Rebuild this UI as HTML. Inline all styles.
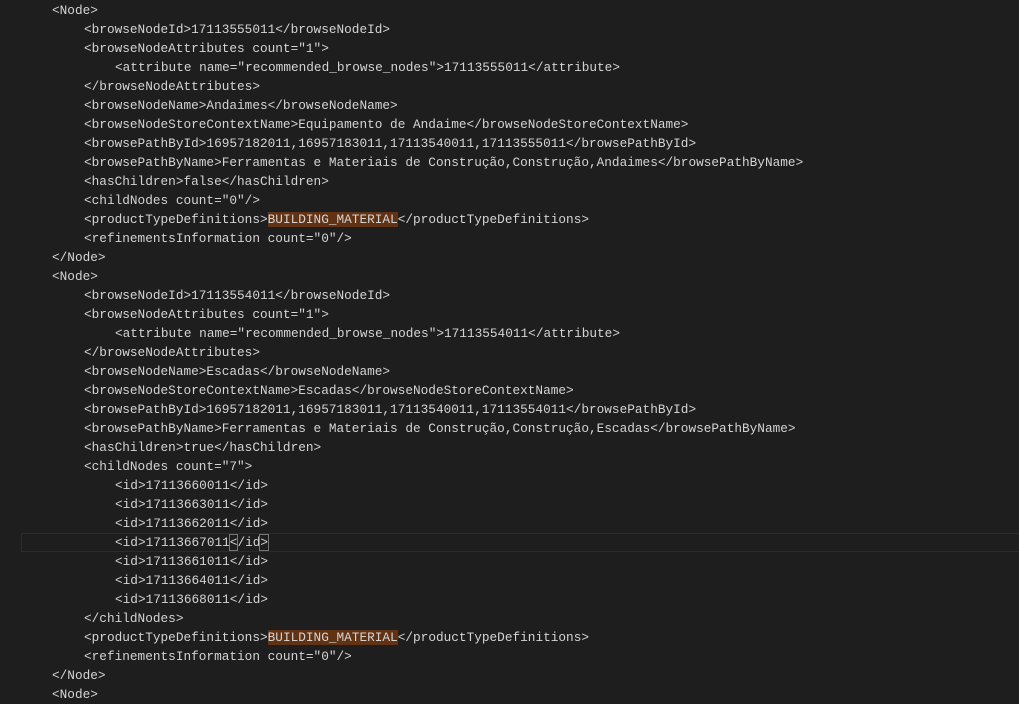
<!DOCTYPE html>
<html><head><meta charset="utf-8"><style>
html,body{margin:0;padding:0;background:#1e1e1e;width:1019px;height:694px;overflow:hidden}
#w{position:absolute;left:0;top:1px;width:1019px;height:694px}
.l{position:absolute;height:19px;line-height:19px;font-family:"Liberation Mono",monospace;font-size:12.75px;color:#d4d4d4;white-space:pre}
.a{left:52px}.b{left:84px}.c{left:115px}
.h{background:#613214}
.cur{position:absolute;left:21px;top:532px;width:1000px;height:17px;border:1px solid #2c2c2c}
.m{outline:1px solid #777;}
</style></head><body><div id="w">
<div class="cur"></div>
<div class="l a" style="top:0px">&lt;Node&gt;</div>
<div class="l b" style="top:19px">&lt;browseNodeId&gt;17113555011&lt;/browseNodeId&gt;</div>
<div class="l b" style="top:38px">&lt;browseNodeAttributes count="1"&gt;</div>
<div class="l c" style="top:57px">&lt;attribute name="recommended_browse_nodes"&gt;17113555011&lt;/attribute&gt;</div>
<div class="l b" style="top:76px">&lt;/browseNodeAttributes&gt;</div>
<div class="l b" style="top:95px">&lt;browseNodeName&gt;Andaimes&lt;/browseNodeName&gt;</div>
<div class="l b" style="top:114px">&lt;browseNodeStoreContextName&gt;Equipamento de Andaime&lt;/browseNodeStoreContextName&gt;</div>
<div class="l b" style="top:133px">&lt;browsePathById&gt;16957182011,16957183011,17113540011,17113555011&lt;/browsePathById&gt;</div>
<div class="l b" style="top:152px">&lt;browsePathByName&gt;Ferramentas e Materiais de Construção,Construção,Andaimes&lt;/browsePathByName&gt;</div>
<div class="l b" style="top:171px">&lt;hasChildren&gt;false&lt;/hasChildren&gt;</div>
<div class="l b" style="top:190px">&lt;childNodes count="0"/&gt;</div>
<div class="l b" style="top:209px">&lt;productTypeDefinitions&gt;<span class="h">BUILDING_MATERIAL</span>&lt;/productTypeDefinitions&gt;</div>
<div class="l b" style="top:228px">&lt;refinementsInformation count="0"/&gt;</div>
<div class="l a" style="top:247px">&lt;/Node&gt;</div>
<div class="l a" style="top:266px">&lt;Node&gt;</div>
<div class="l b" style="top:285px">&lt;browseNodeId&gt;17113554011&lt;/browseNodeId&gt;</div>
<div class="l b" style="top:304px">&lt;browseNodeAttributes count="1"&gt;</div>
<div class="l c" style="top:323px">&lt;attribute name="recommended_browse_nodes"&gt;17113554011&lt;/attribute&gt;</div>
<div class="l b" style="top:342px">&lt;/browseNodeAttributes&gt;</div>
<div class="l b" style="top:361px">&lt;browseNodeName&gt;Escadas&lt;/browseNodeName&gt;</div>
<div class="l b" style="top:380px">&lt;browseNodeStoreContextName&gt;Escadas&lt;/browseNodeStoreContextName&gt;</div>
<div class="l b" style="top:399px">&lt;browsePathById&gt;16957182011,16957183011,17113540011,17113554011&lt;/browsePathById&gt;</div>
<div class="l b" style="top:418px">&lt;browsePathByName&gt;Ferramentas e Materiais de Construção,Construção,Escadas&lt;/browsePathByName&gt;</div>
<div class="l b" style="top:437px">&lt;hasChildren&gt;true&lt;/hasChildren&gt;</div>
<div class="l b" style="top:456px">&lt;childNodes count="7"&gt;</div>
<div class="l c" style="top:475px">&lt;id&gt;17113660011&lt;/id&gt;</div>
<div class="l c" style="top:494px">&lt;id&gt;17113663011&lt;/id&gt;</div>
<div class="l c" style="top:513px">&lt;id&gt;17113662011&lt;/id&gt;</div>
<div class="l c" style="top:532px">&lt;id&gt;17113667011<span class="m">&lt;</span>/id<span class="m">&gt;</span></div>
<div class="l c" style="top:551px">&lt;id&gt;17113661011&lt;/id&gt;</div>
<div class="l c" style="top:570px">&lt;id&gt;17113664011&lt;/id&gt;</div>
<div class="l c" style="top:589px">&lt;id&gt;17113668011&lt;/id&gt;</div>
<div class="l b" style="top:608px">&lt;/childNodes&gt;</div>
<div class="l b" style="top:627px">&lt;productTypeDefinitions&gt;<span class="h">BUILDING_MATERIAL</span>&lt;/productTypeDefinitions&gt;</div>
<div class="l b" style="top:646px">&lt;refinementsInformation count="0"/&gt;</div>
<div class="l a" style="top:665px">&lt;/Node&gt;</div>
<div class="l a" style="top:684px">&lt;Node&gt;</div>
</div></body></html>
